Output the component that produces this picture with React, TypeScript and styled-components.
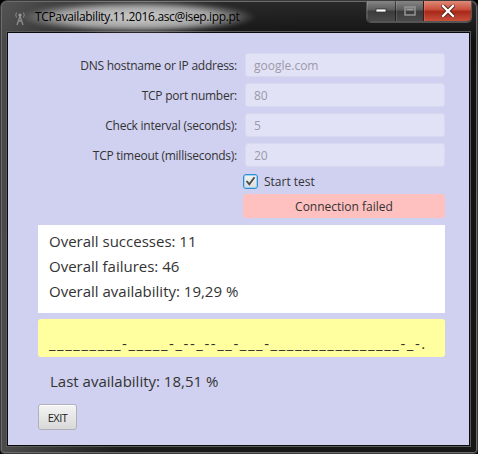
import { createGlobalStyle } from "styled-components";
import styled from "styled-components";
import { Fragment } from "react";

const Lavender = "#d0d0f0";
const TextColor = "#333333";
const UiFont = `"Open Sans", "Noto Sans", sans-serif`;

const GlobalStyle = createGlobalStyle`
  html, body {
    margin: 0;
    padding: 0;
    background: #000;
  }
  body {
    font-family: ${UiFont};
  }
`;

const Window = styled.div`
  width: 478px;
  height: 454px;
  box-sizing: border-box;
  display: flex;
  flex-direction: column;
  border-radius: 7px 7px 4px 4px;
  border: 1px solid #3a3a3a;
  background:
    linear-gradient(90deg, rgba(120, 120, 120, 0.55) 0px, rgba(40, 40, 40, 0.3) 120px, rgba(0, 0, 0, 0) 300px),
    linear-gradient(180deg, #2a2a2a 0px, #111 40px, #161616 100%);
  box-shadow: inset 0 0 0 1px #6c6c6c;
  padding: 0 7px 7px 6px;
  overflow: hidden;
`;

const TitleBar = styled.div`
  height: 31px;
  display: flex;
  flex-direction: row;
  align-items: flex-start;
  flex-shrink: 0;
`;

const AppIcon = styled.div`
  width: 16px;
  height: 16px;
  margin: 9px 0 0 5px;
  display: flex;
`;

const Title = styled.div`
  position: relative;
  margin: 8px 0 0 7px;
  font-family: ${UiFont};
  font-size: 12px;
  line-height: 16px;
  color: #000;
  letter-spacing: -0.35px;
  z-index: 0;

  &::before {
    content: "";
    position: absolute;
    left: -14px;
    right: -16px;
    top: -8px;
    bottom: -8px;
    background: radial-gradient(ellipse closest-side, rgba(235, 235, 235, 0.85) 0%, rgba(220, 220, 220, 0.7) 65%, rgba(200, 200, 200, 0) 100%);
    filter: blur(2px);
    z-index: -1;
  }
`;

const Spacer = styled.div`
  flex: 1;
`;

const CaptionGroup = styled.div`
  display: flex;
  flex-direction: row;
  margin-top: -1px;
  margin-right: -2px;
  border: 1px solid #555;
  border-top: none;
  border-radius: 0 0 5px 5px;
  overflow: hidden;
  box-shadow: 0 1px 0 rgba(255, 255, 255, 0.25);
`;

const CaptionButton = styled.div<{ $w: number; $close?: boolean }>`
  width: ${(p) => p.$w}px;
  height: 21px;
  display: flex;
  align-items: center;
  justify-content: center;
  border-left: ${(p) => (p.$close ? "1px solid #3a1a14" : "1px solid rgba(0,0,0,0.5)")};
  box-shadow: inset 0 1px 0 rgba(255, 255, 255, 0.25), inset 1px 0 0 rgba(255, 255, 255, 0.12);
  background: ${(p) =>
    p.$close
      ? "linear-gradient(180deg, #e09080 0%, #c9503c 45%, #a8281a 55%, #c8503a 100%)"
      : "linear-gradient(180deg, #8a8a8a 0%, #5e5e5e 45%, #3c3c3c 55%, #4a4a4a 100%)"};
  &:first-child {
    border-left: none;
  }
`;

const Client = styled.div`
  flex: 1;
  background: ${Lavender};
  border: 1px solid #0a0a0a;
  box-shadow: 0 0 0 1px #5a5a5a;
  display: flex;
  flex-direction: column;
  padding: 20px 24px 0 30px;
`;

const FormGrid = styled.div`
  display: grid;
  grid-template-columns: 1fr 200px;
  column-gap: 8px;
  row-gap: 6px;
  align-items: center;
`;

const Label = styled.div`
  text-align: right;
  font-size: 12px;
  color: ${TextColor};
  letter-spacing: -0.25px;
`;

const Field = styled.div`
  height: 24px;
  box-sizing: border-box;
  background: #e2e2f6;
  border: 1px solid #d8d8ee;
  border-radius: 3px;
  padding-left: 8px;
  display: flex;
  align-items: center;
  font-size: 12px;
  color: #9a9aa8;
`;

const CheckRow = styled.div`
  display: flex;
  align-items: center;
  gap: 6px;
  margin: 6px 0 0 205px;
  height: 16px;
`;

const CheckBox = styled.div`
  width: 15px;
  height: 15px;
  box-sizing: border-box;
  border: 1px solid #2e8fd0;
  border-radius: 3px;
  background: linear-gradient(180deg, #f4f4f4, #dcdcdc);
  box-shadow: inset 0 0 0 1px #9ed2f4;
  display: flex;
  align-items: center;
  justify-content: center;
`;

const CheckLabel = styled.span`
  font-size: 12px;
  color: ${TextColor};
`;

const StatusBar = styled.div<{ $bg: string }>`
  margin: 5px 0 0 205px;
  height: 24px;
  background: ${(p) => p.$bg};
  border-radius: 3px;
  display: flex;
  align-items: center;
  justify-content: center;
  font-size: 12px;
  color: ${TextColor};
`;

const StatsBox = styled.div`
  margin-top: 7px;
  height: 88px;
  box-sizing: border-box;
  background: #fff;
  padding: 4px 11px;
  display: flex;
  flex-direction: column;
`;

const BigLine = styled.div`
  font-size: 15px;
  line-height: 25px;
  color: ${TextColor};
`;

const HistoryBox = styled.div`
  margin-top: 6px;
  height: 38px;
  box-sizing: border-box;
  background: #ffff9f;
  border-radius: 3px;
  padding: 14px 11px 0 11px;
  font-size: 15px;
  line-height: 20px;
  letter-spacing: 1.55px;
  color: ${TextColor};
  white-space: nowrap;
  overflow: hidden;
`;

const LastLine = styled(BigLine)`
  margin: 12px 0 0 12px;
`;

const ExitButton = styled.button`
  margin-top: 10px;
  width: 39px;
  height: 26px;
  padding: 0;
  font-family: ${UiFont};
  font-size: 11px;
  color: #222;
  letter-spacing: -0.5px;
  border: 1px solid #b0b0b8;
  border-radius: 3px;
  background: linear-gradient(180deg, #f4f4f4 0%, #e6e6e6 50%, #d8d8d8 100%);
  box-shadow: inset 0 1px 0 #fff;
  align-self: flex-start;
`;

const fields = [
  { label: "DNS hostname or IP address:", value: "google.com" },
  { label: "TCP port number:", value: "80" },
  { label: "Check interval (seconds):", value: "5" },
  { label: "TCP timeout (milliseconds):", value: "20" },
];

const history = "_________-_____-_--_--__-___-________________-_-.";

export default function App() {
  return (
    <>
      <GlobalStyle />
      <Window>
        <TitleBar>
          <AppIcon>
            <svg width="16" height="16" viewBox="0 0 16 16">
              <path d="M8 6 L5 15 M8 6 L11 15 M6 11 L10 11" stroke="#8a8a8a" strokeWidth="1.4" fill="none" />
              <circle cx="8" cy="5" r="1.6" fill="#9a9a9a" />
              <path d="M4.5 2.5 Q3 5 4.5 7.5 M11.5 2.5 Q13 5 11.5 7.5" stroke="#8a8a8a" strokeWidth="1" fill="none" />
            </svg>
          </AppIcon>
          <Title>TCPavailability.11.2016.asc@isep.ipp.pt</Title>
          <Spacer />
          <CaptionGroup>
            <CaptionButton $w={28}>
              <svg width="12" height="6" viewBox="0 0 12 6">
                <rect x="1" y="1" width="10" height="3" fill="#fff" stroke="#333" strokeWidth="0.8" />
              </svg>
            </CaptionButton>
            <CaptionButton $w={27}>
              <svg width="12" height="10" viewBox="0 0 12 10">
                <rect x="1" y="1" width="10" height="8" fill="none" stroke="#9a9a9a" strokeWidth="1.4" />
                <rect x="2.5" y="2.5" width="7" height="2" fill="#9a9a9a" />
              </svg>
            </CaptionButton>
            <CaptionButton $w={47} $close>
              <svg width="14" height="12" viewBox="0 0 14 12">
                <path d="M2 1 L12 11 M12 1 L2 11" stroke="#4a1a10" strokeWidth="4" strokeLinecap="square" />
                <path d="M2 1 L12 11 M12 1 L2 11" stroke="#fff" strokeWidth="2.4" strokeLinecap="square" />
              </svg>
            </CaptionButton>
          </CaptionGroup>
        </TitleBar>
        <Client>
          <FormGrid>
            {fields.map((f) => (
              <Fragment key={f.label}>
                <Label>{f.label}</Label>
                <Field>{f.value}</Field>
              </Fragment>
            ))}
          </FormGrid>
          <CheckRow>
            <CheckBox>
              <svg width="11" height="10" viewBox="0 0 11 10">
                <path d="M1.5 5 L4.3 8.2 L9.5 1.2" stroke="#4a4a4a" strokeWidth="1.8" fill="none" />
              </svg>
            </CheckBox>
            <CheckLabel>Start test</CheckLabel>
          </CheckRow>
          <StatusBar $bg="#ffc0c0">Connection failed</StatusBar>
          <StatsBox>
            <BigLine>Overall successes: 11</BigLine>
            <BigLine>Overall failures: 46</BigLine>
            <BigLine>Overall availability: 19,29 %</BigLine>
          </StatsBox>
          <HistoryBox>{history}</HistoryBox>
          <LastLine>Last availability: 18,51 %</LastLine>
          <ExitButton>EXIT</ExitButton>
        </Client>
      </Window>
    </>
  );
}
